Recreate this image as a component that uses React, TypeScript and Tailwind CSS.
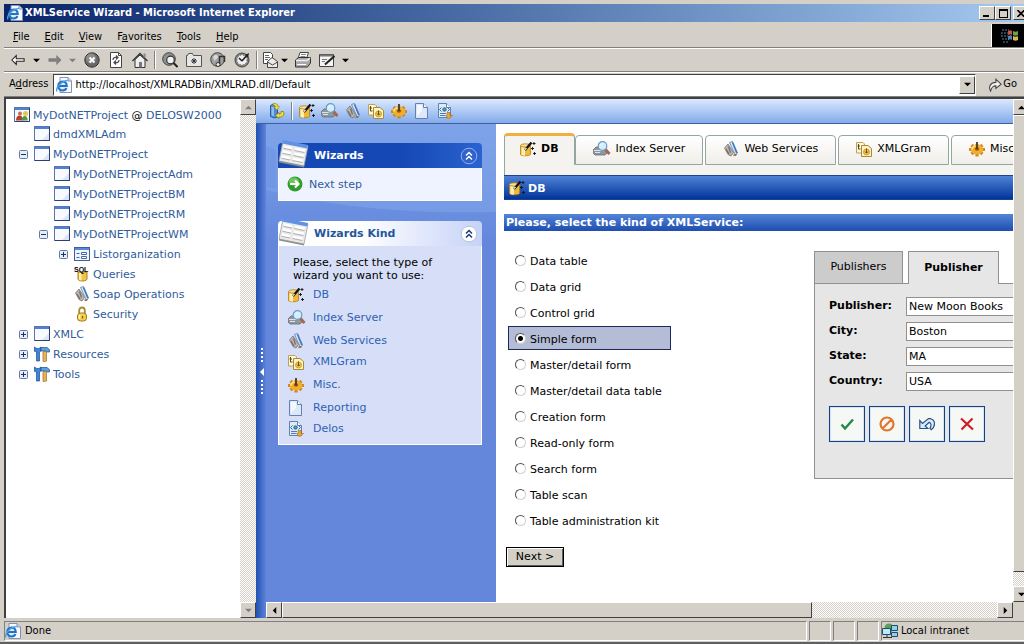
import clsx from 'clsx'
import { FC, ReactNode, useState } from 'react'

/* ---------- icons ---------- */

interface IconProps {
    size?: number
    children: ReactNode
}

const Icon: FC<IconProps> = ({ size = 16, children }) => (
    <svg width={size} height={size} viewBox="0 0 16 16" className="shrink-0" aria-hidden="true">
        {children}
    </svg>
)

const IePageIcon = () => (
    <Icon>
        <path d="M4 .5h8l3.500 3.500v11.500H4z" fill="#f6f9ff" stroke="#7f93b8" />
        <path d="M12 .5v3.500h3.500" fill="#c9d8ef" stroke="#7f93b8" />
        <circle cx="6.500" cy="9" r="5" fill="#d8ecfb" />
        <path d="M2.500 9h8.200C10.600 6 9 4.500 6.600 4.500 4.200 4.500 2.300 6.400 2.300 9s1.900 4.500 4.300 4.500c1.900 0 3.200-.8 3.800-2.300" fill="none" stroke="#2272c0" strokeWidth="2.200" />
        <path d="M1 14.500C-.8 11 5 4.200 11.800 3.400" fill="none" stroke="#4c9fe0" strokeWidth="1.400" />
    </Icon>
)

const WindowIcon = () => (
    <Icon>
        <rect x=".5" y=".5" width="15" height="14" fill="#f8faff" stroke="#5a74ae" />
        <path d="M1 1h14v2H1z" fill="#4f80dc" />
        <path d="M15.500 1v13.500H1" fill="none" stroke="#2c4070" />
        <path d="M8 14l7-7v7z" fill="#dbe5fa" />
    </Icon>
)

const ProjectIcon = () => (
    <Icon>
        <rect x=".5" y=".5" width="15" height="14" fill="#f4f7fe" stroke="#5a74ae" />
        <path d="M1 1h14v2H1z" fill="#4f80dc" />
        <path d="M15.500 1v13.500H1" fill="none" stroke="#2c4070" />
        <circle cx="11.500" cy="6.500" r="2.500" fill="#e6c84a" />
        <circle cx="6" cy="6.500" r="2" fill="#c0744c" />
        <path d="M2 13.500c0-3.500 1.500-5 3.500-5s3.500 1.500 3.500 5z" fill="#b3402e" />
        <path d="M8 13.500c0-3 1-4.500 2.700-4.500s3 1.500 3 4.500z" fill="#4d9a48" />
    </Icon>
)

const ListIcon = () => (
    <Icon>
        <rect x=".5" y="1.500" width="15" height="13" fill="#eef3fd" stroke="#3e5f9e" />
        <path d="M1 2h14v2H1z" fill="#5b87d8" />
        <path d="M2.500 7.500h3M2.500 11.500h3" stroke="#4467a8" />
        <path d="M7.500 6.500h5v2h-5zM7.500 10.500h5v2h-5z" fill="#fff" stroke="#4467a8" />
    </Icon>
)

const QueryIcon = () => (
    <Icon>
        <path d="M4 6v7c0 1.200 2 2 4.500 2s4.500-.8 4.500-2V6z" fill="#f0c544" stroke="#b07d1c" />
        <path d="M5 7v6.500c.8.600 1.500.800 2.500 1V7z" fill="#fff0b0" />
        <text x="0" y="6" fontSize="7" fontWeight="bold" fontFamily="Liberation Sans, sans-serif" fill="#000">SQL</text>
    </Icon>
)

const WebIcon = () => (
    <Icon>
        <path d="M1.500 7L5 3l5.500 8.500L8 15l-3-1.500z" fill="#b9b5b0" stroke="#6d7178" strokeWidth=".8" />
        <path d="M3 8l3 5M5.500 5.500l2 6" stroke="#7d6a5a" strokeWidth="1.200" />
        <path d="M6.500 1.500l3-1 5 11.500-2 2.500z" fill="#dbe9f8" stroke="#5c7ba6" strokeWidth=".8" />
        <path d="M9.500 1.500l4.300 10.500" stroke="#3f76be" strokeWidth="1.500" />
        <path d="M10.500 14.500l3-1" stroke="#9a6a38" strokeWidth="1.500" />
    </Icon>
)

const LockIcon = () => (
    <Icon>
        <path d="M5.200 8V4.500C5.200 2.500 6.500 1.500 8 1.500s2.800 1 2.800 3V8" fill="none" stroke="#a98a2e" strokeWidth="1.800" />
        <rect x="3.500" y="7" width="9" height="8" rx="3" fill="#f2cf4e" stroke="#a67c17" />
        <path d="M5.500 8.500v4.500" stroke="#fff3b8" strokeWidth="1.500" />
        <path d="M8.500 10v2.500" stroke="#7a5a10" strokeWidth="1.300" />
    </Icon>
)

const ToolsIcon = () => (
    <Icon>
        <path d="M0 1l3 1.500h2L7 1v4L5.500 6v9H2.500V6L0 5z" fill="#3b84d8" stroke="#1f4f94" strokeWidth=".7" />
        <path d="M7 1.500h6l2.500 2V6H13l-1-1H7z" fill="#58a0e6" stroke="#1f4f94" strokeWidth=".7" />
        <path d="M9 5.500h3.500V15l-1 .800H9.500L9 15z" fill="#e8b25a" stroke="#9a6a24" strokeWidth=".7" />
    </Icon>
)

const DbIcon = () => (
    <Icon>
        <path d="M.5 4.500v9C.5 15.200 9 15.200 10.500 13.500v-9z" fill="#f1b93a" stroke="#b07d1c" strokeWidth=".8" />
        <path d="M1.500 5.500v8.500c1 .5 2 .6 3.500.7V5.500z" fill="#fff0b4" />
        <ellipse cx="5.500" cy="4.500" rx="5" ry="1.700" fill="#fbe08a" stroke="#b07d1c" strokeWidth=".8" />
        <path d="M5 9l6.500-7.500" stroke="#111" strokeWidth="2.200" />
        <path d="M5 8.700l1.500-1.700" stroke="#fff" strokeWidth="1.200" />
        <path d="M14 1v3M12.500 2.500h3M12.500 6v3M11 7.500h3M14.500 11v3M13 12.500h3" stroke="#111" strokeWidth=".9" />
    </Icon>
)

const IndexIcon = () => (
    <svg width="18" height="16" viewBox="0 0 18 16" className="shrink-0" aria-hidden="true">
        <path d="M0 9l3-3h9l2 3v3l-2 2H2l-2-2z" fill="#8f979f" stroke="#636b73" strokeWidth=".8" />
        <path d="M1 9.500h8M2 11.500h5" stroke="#dfe3e8" />
        <path d="M12.500 8.500l4 4.500" stroke="#a8664c" strokeWidth="2.800" />
        <circle cx="9.500" cy="5" r="4.300" fill="#d3eefa" stroke="#6b9cc4" strokeWidth="1.200" />
        <path d="M7.500 4.500c.3-1 1-1.600 2-1.700" stroke="#fff" fill="none" />
    </svg>
)

const GramIcon = () => (
    <Icon>
        <path d="M.5 1.500H7l1.500 1.500v9h-8z" fill="#fff8dc" stroke="#bda356" />
        <path d="M2.500 3v5h2M1.500 5h2.500" stroke="#5a4a20" fill="none" />
        <path d="M5.500 4.500h6.500l3.500 3v8h-10z" fill="#fff3c4" stroke="#a98a35" />
        <circle cx="10.500" cy="11" r="3" fill="#f6cf52" stroke="#b98420" strokeWidth=".7" />
        <path d="M10.500 7.500v4.500M9 10.500l1.500 1.700 1.500-1.700" stroke="#704a10" fill="none" />
    </Icon>
)

const GearIcon = () => (
    <Icon>
        <path d="M8 3v12.500M0 8.500h16M2.500 4l11 9M13.500 4l-11 9" stroke="#cf8a1e" strokeWidth="3.200" />
        <ellipse cx="8" cy="8.500" rx="6.200" ry="4.800" fill="#f3ac2c" />
        <path d="M2.800 8.500c.5-2.500 2-3.400 3.700-3.700" stroke="#ffe196" fill="none" strokeWidth="1.500" />
        <ellipse cx="8" cy="8" rx="2.200" ry="1.800" fill="#8b5c16" />
        <path d="M8 1v7" stroke="#4a3a20" strokeWidth="1.800" />
    </Icon>
)

const PageIcon = () => (
    <Icon>
        <path d="M1.500.5h8l4 4v11h-12z" fill="#dce8f9" stroke="#6480ae" />
        <path d="M9.500.5v4h4" fill="#fff" stroke="#6480ae" />
        <path d="M3 2h5v6L3 13z" fill="#f3f8ff" />
    </Icon>
)

const DelosIcon = () => (
    <Icon>
        <path d="M1.500.5h8l4 4v10h-12z" fill="#dceafa" stroke="#6480ae" />
        <path d="M9.500.5v4h4" fill="#fff" stroke="#6480ae" />
        <path d="M4.500 4.500l-2 2 2 2M10.500 4.500l2 2-2 2" stroke="#2b6fae" fill="none" />
        <circle cx="7.500" cy="6.500" r="1.700" fill="#4fa3a0" stroke="#28609c" />
        <path d="M3 10.500h6M3 12.500h5" stroke="#5479b4" />
        <path d="M10 9.500h3v3h2.500L11.500 16l-3-3.500H10z" fill="#f0a636" stroke="#9e6a20" strokeWidth=".6" />
    </Icon>
)

const RefreshDbIcon = () => (
    <Icon>
        <path d="M1.500 2.500l3-1.500 4 1v12l-3 1-4-1.500z" fill="#4f8ad8" stroke="#2d589c" />
        <path d="M2.500 3.500l2.500.8v9l-2.500-.8z" fill="#8fbcf0" />
        <path d="M4 .5c3-.5 5 .5 5 3l1.500.2L8 7 5 4h1.500C6.500 2.500 5.500 2 4 2z" fill="#f2dc3c" stroke="#97851c" strokeWidth=".6" />
        <path d="M14.500 8.500c1.500 3.500-1 6-4.500 5.500V15.500L6.500 12.500 10 9.500V11c1.500.2 2.500-.8 2-2.500z" fill="#f2dc3c" stroke="#7c7c24" strokeWidth=".8" />
    </Icon>
)

const NextIcon = () => (
    <Icon>
        <circle cx="8" cy="8" r="7.500" fill="#2f9e2c" />
        <ellipse cx="7" cy="5.500" rx="5" ry="4" fill="#6fc65e" />
        <path d="M3 8h8M8 4.500L11.500 8 8 11.500" fill="none" stroke="#fff" strokeWidth="2.200" />
    </Icon>
)

const SheetIcon = () => (
    <svg width="32" height="28" viewBox="0 0 32 28" className="shrink-0" aria-hidden="true">
        <path d="M5 1l25 5-4 20L1 21z" fill="#e9e9e7" stroke="#9ba0ab" strokeWidth=".8" />
        <path d="M5 0l25 5-.8 3.500-25-5z" fill="#5f92e6" />
        <path d="M26 26L1 21l.2 1.500 25 5z" fill="#8d8c88" />
        <path d="M5.500 8l8.500 1.700M16.500 10.200l10 2M4.500 13l8.500 1.700M15.500 15.200l10 2M3.600 18l8.500 1.700M14.500 20.200l10 2" stroke="#aeaeb2" strokeWidth="1.500" />
        <path d="M5.700 6.500l8.500 1.700M16.800 8.700l10 2M4.700 11.500l8.500 1.700M15.800 13.700l10 2M3.800 16.500l8.500 1.700M14.800 18.700l10 2" stroke="#fff" strokeWidth="2.600" />
    </svg>
)

const Chevrons: FC<{ dark?: boolean }> = ({ dark }) => (
    <svg width="18" height="18" viewBox="0 0 18 18" aria-hidden="true">
        <circle cx="9" cy="9" r="7.800" fill={dark ? '#2f62cc' : '#fff'} stroke={dark ? '#8fb0ee' : '#b9c3dd'} />
        <path d="M6 8.500l3-3 3 3M6 12.500l3-3 3 3" fill="none" stroke={dark ? '#fff' : '#1c3a72'} strokeWidth="1.500" />
    </svg>
)

const Caret: FC<{ dir?: 'up' | 'down' | 'left' | 'right'; muted?: boolean }> = ({ dir = 'down', muted }) => {
    const paths = { up: 'M0 6h8L4 2z', down: 'M0 2h8L4 6z', left: 'M6 0v8L2 4z', right: 'M2 0v8l4-4z' }
    return (
        <svg width="7" height="7" viewBox="0 0 8 8" className="shrink-0" aria-hidden="true">
            <path d={paths[dir]} fill={muted ? '#808080' : '#000'} />
        </svg>
    )
}

/* ---------- browser chrome ---------- */

const raised = 'bg-[#d4d0c8] border border-t-white border-l-white border-r-[#404040] border-b-[#404040]'
const dither = 'bg-[repeating-conic-gradient(#fff_0_25%,#d4d0c8_0_50%)] bg-[length:2px_2px]'

const TitleBar = () => (
    <header className="flex h-[18px] shrink-0 items-center bg-linear-to-r from-[#0a246a] to-[#a6caf0] pl-[3px] text-white">
        <IePageIcon />
        <h1 className="ml-[2px] flex-1 truncate font-bold">XMLService Wizard - Microsoft Internet Explorer</h1>
        <button aria-label="Minimize" className={clsx(raised, 'flex h-[14px] w-4 items-end pb-[2px] pl-[3px]')}>
            <span className="h-[2px] w-[6px] bg-black" />
        </button>
        <button aria-label="Maximize" className={clsx(raised, 'mr-[2px] flex h-[14px] w-4 items-center justify-center')}>
            <span className="h-[9px] w-[9px] border border-t-2 border-black" />
        </button>
        <button aria-label="Close" className={clsx(raised, 'flex h-[14px] w-4 items-center justify-center')}>
            <svg width="8" height="7" viewBox="0 0 8 7" aria-hidden="true">
                <path d="M.5 0l7 7M7.500 0l-7 7" stroke="#000" strokeWidth="1.600" />
            </svg>
        </button>
    </header>
)

const menus = [
    ['', 'F', 'ile'],
    ['', 'E', 'dit'],
    ['', 'V', 'iew'],
    ['F', 'a', 'vorites'],
    ['', 'T', 'ools'],
    ['', 'H', 'elp']
]

const MenuBar = () => (
    <div className="mt-[2px] flex h-6 shrink-0 border-b border-[#808080]">
        <nav className="flex flex-1 items-center gap-[15px] pl-[9px] pt-[3px]">
            {menus.map(([before, key, after]) => (
                <button key={key + after}>
                    {before}
                    <u>{key}</u>
                    {after}
                </button>
            ))}
        </nav>
        <div className="flex w-[38px] items-center justify-center border-l border-white bg-black">
            <svg width="20" height="18" viewBox="0 0 20 18" aria-hidden="true">
                <path d="M1 3h7M0 6h7M0 9h7M1 12h7M2 15h6" stroke="#5b7fae" strokeWidth="1" strokeDasharray="2 1" />
                <path d="M7 4c2-1 3-1 4 0v4c-1-1-2-1-4 0z" fill="#c9573c" />
                <path d="M12 4c2 1 3 1 5 0v4c-2 1-3 1-5 0z" fill="#6da04c" />
                <path d="M7 9c2-1 3-1 4 0v4c-1-1-2-1-4 0z" fill="#4c82c4" />
                <path d="M12 9c2 1 3 1 5 0v4c-2 1-3 1-5 0z" fill="#d8b84a" />
            </svg>
        </div>
    </div>
)

const ToolButton: FC<{ label: string; className?: string; children: ReactNode }> = ({ label, className = 'w-6', children }) => (
    <button aria-label={label} className={clsx('flex h-full shrink-0 items-center justify-center', className)}>
        {children}
    </button>
)

const Separator = () => (
    <div className="flex w-[6px] shrink-0 justify-center">
        <span className="h-[18px] w-[2px] border-l border-r border-l-[#808080] border-r-white" />
    </div>
)

const StandardBar = () => (
    <div className="flex h-6 shrink-0 items-center border-t border-b border-t-white border-b-[#808080] pl-[6px]">
        <ToolButton label="Back" className="w-4">
            <Icon size={14}>
                <path d="M1 8l5-5v3.500h9v3H6V13z" fill="#fff" stroke="#222" strokeWidth="1.200" />
            </Icon>
        </ToolButton>
        <ToolButton label="Back history" className="w-5"><Caret /></ToolButton>
        <ToolButton label="Forward" className="w-[18px]">
            <Icon size={14}>
                <path d="M15 8l-5-5v3.500H1v3h9V13z" fill="#808080" stroke="#808080" />
            </Icon>
        </ToolButton>
        <ToolButton label="Forward history" className="w-4"><Caret muted /></ToolButton>
        <ToolButton label="Stop">
            <Icon>
                <circle cx="8" cy="8" r="7.200" fill="#686868" stroke="#333" />
                <circle cx="7" cy="6.500" r="5" fill="#8c8c8c" />
                <path d="M5.500 5.500l5 5M10.500 5.500l-5 5" stroke="#fff" strokeWidth="1.800" />
            </Icon>
        </ToolButton>
        <ToolButton label="Refresh">
            <Icon>
                <path d="M2.500.5h8l3 3v12h-11z" fill="#fff" stroke="#444" />
                <path d="M10.500.5v3h3" fill="none" stroke="#444" />
                <path d="M5 8c0-2 1.500-3 4-2.500M8 3.500l2 2-2 2M11 8c0 2-1.500 3-4 2.500M8 8.500l-2 2 2 2" fill="none" stroke="#444" strokeWidth="1.200" />
            </Icon>
        </ToolButton>
        <ToolButton label="Home">
            <Icon>
                <path d="M3 7.500v8h10v-8L8 3z" fill="#eee" stroke="#333" />
                <path d="M.5 9L8 1.500 15.500 9" fill="none" stroke="#333" strokeWidth="1.300" />
                <path d="M11.500 1.500h2v4h-2z" fill="#888" />
                <path d="M7 10h3v5.500H7z" fill="#777" />
            </Icon>
        </ToolButton>
        <Separator />
        <ToolButton label="Search">
            <Icon>
                <circle cx="7" cy="7" r="6.300" fill="#909090" stroke="#444" />
                <circle cx="8.500" cy="8" r="3.800" fill="#f2f2f2" stroke="#333" strokeWidth="1.200" />
                <path d="M11.500 11l4 4" stroke="#222" strokeWidth="2" />
            </Icon>
        </ToolButton>
        <ToolButton label="Favorites">
            <Icon>
                <path d="M.5 14.500V3.500h1l1-2h4l1 2h8v11z" fill="#e6e6e6" stroke="#555" />
                <path d="M8 6v6M5 9h6M6 7l4 4M10 7l-4 4" stroke="#333" />
            </Icon>
        </ToolButton>
        <ToolButton label="Media">
            <Icon>
                <circle cx="7.500" cy="7.500" r="6.800" fill="#a0a0a0" stroke="#444" />
                <path d="M3 5c2-3 5-2 5 0s-4 2-3 5" fill="#d8d8d8" />
                <path d="M9.500 12V4.500h5V10" fill="none" stroke="#333" strokeWidth="1.500" />
                <circle cx="8" cy="12.500" r="2" fill="#eee" stroke="#333" />
            </Icon>
        </ToolButton>
        <ToolButton label="History">
            <Icon>
                <circle cx="8" cy="8" r="7" fill="#8a8a8a" stroke="#444" />
                <circle cx="8" cy="8" r="5" fill="#f0f0f0" strokeDasharray="1 2" stroke="#555" />
                <path d="M8 9l5-6M8 9L5 6" stroke="#222" strokeWidth="1.600" />
                <path d="M11 3l4-2-1 5z" fill="#222" />
            </Icon>
        </ToolButton>
        <Separator />
        <ToolButton label="Mail" className="w-5">
            <Icon>
                <path d="M1.500.5h7l2 2v9h-9z" fill="#fff" stroke="#444" />
                <path d="M3 3.500h4M3 5.500h5M3 7.500h3" stroke="#666" />
                <path d="M5.500 9.500L10 5.500l5.500 4v6h-10z" fill="#ececec" stroke="#444" />
                <path d="M5.500 10l5 3 5-3" fill="none" stroke="#444" />
            </Icon>
        </ToolButton>
        <ToolButton label="Mail options" className="mr-[3px] w-2"><Caret /></ToolButton>
        <ToolButton label="Print">
            <Icon>
                <path d="M5 .5h8.500l-2 6H3z" fill="#fff" stroke="#444" />
                <path d="M6 2.500h5M5.500 4.500h5" stroke="#888" />
                <path d="M.5 8l3-2.500h12V11l-3 4H.5z" fill="#a8a8a8" stroke="#333" />
                <path d="M1 8.500h11l3-2.500" stroke="#eee" fill="none" strokeWidth="1.500" />
                <path d="M2 12.500h9" stroke="#fff" />
            </Icon>
        </ToolButton>
        <ToolButton label="Edit">
            <Icon>
                <path d="M.5 2.500h14v12H.5z" fill="#f4f4f4" stroke="#444" />
                <path d="M1 3.500h13" stroke="#777" strokeWidth="2" />
                <path d="M3 7.500h5M3 9.500h3" stroke="#777" />
                <path d="M6 12.500L15.500 4" stroke="#222" strokeWidth="2" />
            </Icon>
        </ToolButton>
        <ToolButton label="Edit options" className="w-3"><Caret /></ToolButton>
    </div>
)

const AddressBar = () => (
    <div className="flex h-[25px] shrink-0 items-center border-t border-b border-t-white border-b-[#808080] pl-[5px]">
        <label htmlFor="address" className="mr-[5px]">
            A<u>d</u>dress
        </label>
        <div className="flex h-[22px] flex-1 items-center border border-t-[#404040] border-l-[#404040] border-r-white border-b-white bg-white pl-[2px]">
            <IePageIcon />
            <input id="address" defaultValue="http://localhost/XMLRADBin/XMLRAD.dll/Default" className="ml-[3px] min-w-0 flex-1 pt-[2px] outline-none" />
            <button aria-label="Address history" className={clsx(raised, 'flex h-[18px] w-4 items-center justify-center')}>
                <Caret />
            </button>
        </div>
        <button className="ml-3 mr-3 flex items-center gap-px">
            <Icon size={14}>
                <path d="M3 15c-3-5 0-10 6-10V1.500L15 7l-6 5V9c-4 0-5 2-6 6z" fill="#f2f2f2" stroke="#444" strokeWidth="1.200" />
            </Icon>
            Go
        </button>
    </div>
)

const StatusBar = () => {
    const cell = 'border border-t-[#808080] border-l-[#808080] border-r-white border-b-white'
    return (
        <footer className="mt-[3px] flex h-5 shrink-0 gap-[2px]">
            <div className={clsx(cell, 'flex flex-1 items-center gap-1')}>
                <IePageIcon />
                Done
            </div>
            <div className={clsx(cell, 'w-[22px]')} />
            <div className={clsx(cell, 'w-[22px]')} />
            <div className={clsx(cell, 'w-[22px]')} />
            <div className={clsx(cell, 'flex w-[148px] items-center gap-[3px]')}>
                <Icon>
                    <circle cx="7" cy="5" r="4.500" fill="#5aa05a" />
                    <path d="M.5 5.500h8v6h-8z" fill="#bfe8f4" stroke="#1f4d6c" />
                    <path d="M9.500 2.500h6v5h-6zM9.500 9.500h6v4h-6z" fill="#8fd0ec" stroke="#1f4d6c" />
                    <path d="M1 14.500h9M5 12v2" stroke="#333" />
                </Icon>
                Local intranet
            </div>
        </footer>
    )
}

/* ---------- project tree ---------- */

interface TreeNode {
    label: string
    level: number
    icon: ReactNode
    state?: 'open' | 'closed'
}

const nodes: TreeNode[] = [
    { label: 'dmdXMLAdm', level: 0, icon: <WindowIcon /> },
    { label: 'MyDotNETProject', level: 0, icon: <WindowIcon />, state: 'open' },
    { label: 'MyDotNETProjectAdm', level: 1, icon: <WindowIcon /> },
    { label: 'MyDotNETProjectBM', level: 1, icon: <WindowIcon /> },
    { label: 'MyDotNETProjectRM', level: 1, icon: <WindowIcon /> },
    { label: 'MyDotNETProjectWM', level: 1, icon: <WindowIcon />, state: 'open' },
    { label: 'Listorganization', level: 2, icon: <ListIcon />, state: 'closed' },
    { label: 'Queries', level: 2, icon: <QueryIcon /> },
    { label: 'Soap Operations', level: 2, icon: <WebIcon /> },
    { label: 'Security', level: 2, icon: <LockIcon /> },
    { label: 'XMLC', level: 0, icon: <WindowIcon />, state: 'closed' },
    { label: 'Resources', level: 0, icon: <ToolsIcon />, state: 'closed' },
    { label: 'Tools', level: 0, icon: <ToolsIcon />, state: 'closed' }
]

const indents = ['pl-[13px]', 'pl-[33px]', 'pl-[53px]']

const ProjectTree = () => (
    <aside className="flex w-[250px] shrink-0 bg-white">
        <div className="min-w-0 flex-1 overflow-hidden pt-[7px] text-[#2f5b9c]">
            <div className="flex h-[18px] items-center gap-[3px] whitespace-nowrap pl-2">
                <ProjectIcon />
                <span className="pt-[2px]">
                    <a href="#project">MyDotNETProject</a> <span className="text-black">@</span> <a href="#server">DELOSW2000</a>
                </span>
            </div>
            <ul>
                {nodes.map(({ label, level, icon, state }) => (
                    <li key={label} className={clsx('flex h-5 items-center whitespace-nowrap', indents[level])}>
                        <span className="flex w-[15px]">
                            {state && (
                                <button aria-label={state === 'open' ? 'Collapse' : 'Expand'}>
                                    <svg width="9" height="9" viewBox="0 0 9 9" aria-hidden="true">
                                        <rect x=".5" y=".5" width="8" height="8" rx="1" fill="#e6edf8" stroke="#5f7ba6" />
                                        <path d={state === 'open' ? 'M2 4.500h5' : 'M2 4.500h5M4.500 2v5'} stroke="#1b335e" />
                                    </svg>
                                </button>
                            )}
                        </span>
                        {icon}
                        <a href={'#' + label} className="ml-[3px] pt-[2px]">{label}</a>
                    </li>
                ))}
            </ul>
        </div>
        <div className={clsx('flex w-4 flex-col justify-between', dither)}>
            <button aria-label="Scroll up" className={clsx(raised, 'flex h-4 items-center justify-center')}><Caret dir="up" muted /></button>
            <button aria-label="Scroll down" className={clsx(raised, 'flex h-4 items-center justify-center')}><Caret muted /></button>
        </div>
    </aside>
)

/* ---------- wizard pages ---------- */

const wizards = [
    { label: 'DB', icon: <DbIcon /> },
    { label: 'Index Server', icon: <IndexIcon /> },
    { label: 'Web Services', icon: <WebIcon />, short: true },
    { label: 'XMLGram', icon: <GramIcon /> },
    { label: 'Misc.', icon: <GearIcon /> },
    { label: 'Reporting', icon: <PageIcon />, short: true },
    { label: 'Delos', icon: <DelosIcon />, short: true }
]

const WizardToolbar = () => (
    <div className="flex h-[25px] shrink-0 items-center border-b border-[#3f5f9c] bg-linear-to-b from-[#dbe9fe] to-[#83abea] pl-[9px]">
        <ToolButton label="Refresh project"><RefreshDbIcon /></ToolButton>
        <Separator />
        {wizards.map(({ label, icon }) => (
            <ToolButton key={label} label={label} className="w-[23px]">{icon}</ToolButton>
        ))}
    </div>
)

const TaskPanel: FC<{ title: string; primary?: boolean; children: ReactNode }> = ({ title, primary, children }) => (
    <section className="mb-5">
        <div
            className={clsx(
                'flex h-[25px] items-end rounded-t bg-linear-to-r',
                primary ? 'from-[#1548b4] from-60% to-[#2a62cf] text-white' : 'from-white from-40% to-[#c6d3f7] text-[#25569c]'
            )}
        >
            <SheetIcon />
            <h2 className="ml-1 flex-1 self-center pt-[2px] font-bold">{title}</h2>
            <button aria-label={'Collapse ' + title} className="mr-1 self-center">
                <Chevrons dark={primary} />
            </button>
        </div>
        <div className={clsx('border border-t-0 border-white', primary ? 'bg-[#eff3ff]' : 'bg-[#d6dff7]')}>{children}</div>
    </section>
)

const TaskPane = () => (
    <aside className="relative w-[230px] shrink-0 bg-linear-to-b from-[#7ba2e7] to-[#6487dc] to-25% pl-3 pr-[14px] pt-[19px]">
        <svg className="absolute left-0 top-0 h-[96px] w-full" viewBox="0 0 230 96" preserveAspectRatio="none" aria-hidden="true">
            <path d="M0 0h230v88C150 90 70 84 0 66z" fill="#7ea3ea" opacity=".6" />
            <path d="M0 22c5 1 8 3 10 6v36H0z" fill="#6e93e2" opacity=".6" />
        </svg>
        <div className="relative">
            <TaskPanel title="Wizards" primary>
                <a href="#next" className="flex h-8 items-center gap-[6px] pl-2 text-[#2f5b9c]">
                    <NextIcon />
                    <span className="pt-[2px]">Next step</span>
                </a>
            </TaskPanel>
            <TaskPanel title="Wizards Kind">
                <p className="px-[14px] pt-[10px] leading-[13px]">Please, select the type of wizard you want to use:</p>
                <ul className="mt-[5px] pb-[2px] pl-[9px] text-[#2f5fb4]">
                    {wizards.map(({ label, icon, short }) => (
                        <li key={label} className={clsx('flex items-start leading-4', short ? 'h-[21px]' : 'h-[23px]')}>
                            <span className="w-[25px]">{icon}</span>
                            <a href={'#' + label}>{label}</a>
                        </li>
                    ))}
                </ul>
            </TaskPanel>
        </div>
    </aside>
)

const WizardTabs = () => (
    <div>
        <div className="flex items-start gap-[2px] whitespace-nowrap">
            {wizards.slice(0, 5).map(({ label, icon }, i) => (
                <button
                    key={label}
                    className={clsx(
                        'flex shrink-0 items-center gap-[5px] rounded-t border border-[#93a7a2]',
                        i === 0
                            ? '-mr-[2px] h-8 rounded-b-none border-t-[3px] border-b-0 border-t-[#f0b040] bg-[#f5f3ef] px-[15px] pb-[3px] font-bold'
                            : 'mt-[2px] h-[30px] bg-linear-to-b from-white to-[#f0eee8] px-[17px] pb-[2px]'
                    )}
                >
                    {icon}
                    {label}
                </button>
            ))}
        </div>
        <div className="h-[10px] border-l border-[#93a7a2] bg-[#f5f3ef]" />
    </div>
)

const kinds = [
    'Data table',
    'Data grid',
    'Control grid',
    'Simple form',
    'Master/detail form',
    'Master/detail data table',
    'Creation form',
    'Read-only form',
    'Search form',
    'Table scan',
    'Table administration kit'
]

const KindForm = () => {
    const [kind, setKind] = useState('Simple form')
    return (
        <form className="shrink-0" onSubmit={e => e.preventDefault()}>
            <div className="ml-1 w-[163px]">
                {kinds.map(name => (
                    <label
                        key={name}
                        className={clsx(
                            'mb-[2px] flex h-6 items-center gap-1 whitespace-nowrap border pl-[6px]',
                            name === kind ? 'border-[#1a2a5c] bg-[#b5bdd6]' : 'border-transparent'
                        )}
                    >
                        <input
                            type="radio"
                            name="kind"
                            checked={name === kind}
                            onChange={() => setKind(name)}
                            className="h-[11px] w-[11px] shrink-0 appearance-none rounded-full border border-t-[#505050] border-l-[#505050] border-r-[#d4d0c8] border-b-[#d4d0c8] bg-white checked:bg-[radial-gradient(circle,#000_2px,#fff_3px)]"
                        />
                        <span className="pt-[5px]">{name}</span>
                    </label>
                ))}
            </div>
            <button className="ml-[2px] mt-[13px] h-5 w-[58px] border border-black bg-[#d4d0c8] shadow-[inset_1px_1px_#fff,inset_-1px_-1px_#606060]">
                Next &gt;
            </button>
        </form>
    )
}

const fields = [
    ['Publisher', 'New Moon Books'],
    ['City', 'Boston'],
    ['State', 'MA'],
    ['Country', 'USA']
]

const actions = [
    {
        label: 'Save',
        icon: <path d="M2.500 8.500l3.500 4L14 3.500" fill="none" stroke="#1f8a48" strokeWidth="2.400" />
    },
    {
        label: 'Cancel',
        icon: <path d="M3.500 12.500l9-9M14.500 8A6.500 6.500 0 1 1 1.500 8a6.500 6.500 0 0 1 13 0z" fill="none" stroke="#e2762a" strokeWidth="2.200" />
    },
    {
        label: 'Undo',
        icon: <path d="M.8 4.500v8h8L6.200 10l4-3.800c2 .8 2.500 3.300.8 6l1.200 1.500c4.500-3 4.500-9.500-.5-11L9.500 2.500 3.500 7.500z" fill="#dcebfa" stroke="#24508c" strokeWidth="1.200" />
    },
    {
        label: 'Delete',
        icon: <path d="M2 2.500l12 11M13.500 2.500L2.500 13.500" fill="none" stroke="#d01c28" strokeWidth="2.200" />
    }
]

const PreviewForm = () => (
    <form className="mt-[3px] w-[320px] shrink-0" onSubmit={e => e.preventDefault()}>
        <div className="relative flex gap-[5px]">
            <button className="-mb-px h-[33px] w-[89px] border border-[#909090] bg-[#ccc]">Publishers</button>
            <button className="-mb-px h-[33px] w-[91px] border border-b-0 border-[#909090] bg-[#e6e6e6] font-bold">Publisher</button>
        </div>
        <div className="border border-[#909090] bg-[#e6e6e6] px-[14px] pt-[13px] pb-9">
            <div className="flex flex-col gap-[6px]">
                {fields.map(([label, value]) => (
                    <div key={label} className="flex items-center">
                        <label htmlFor={label} className="w-[77px] font-bold">{label}:</label>
                        <input id={label} defaultValue={value} className="h-[19px] w-[200px] border border-[#909090] bg-white px-[2px]" />
                    </div>
                ))}
            </div>
            <div className="mt-[15px] flex gap-1">
                {actions.map(({ label, icon }) => (
                    <button
                        key={label}
                        type="button"
                        aria-label={label}
                        className="flex h-9 w-9 items-center justify-center border border-[#1c3f6e] bg-[#f6f8f6] shadow-[inset_0_0_0_1px_#d3e3f8,0_0_0_1px_#d9e6f8]"
                    >
                        <Icon>{icon}</Icon>
                    </button>
                ))}
            </div>
        </div>
    </form>
)

const WizardPage = () => (
    <main className="min-w-0 flex-1 overflow-hidden bg-white pl-2 pt-[9px]">
        <WizardTabs />
        <h2 className="flex h-[25px] items-center gap-[3px] border-t border-b border-t-[#1d4391] border-b-[#1d4391] bg-linear-to-b from-[#4f82d6] to-[#003399] pl-[5px] font-bold text-white">
            <DbIcon />
            <span className="pt-[3px]">DB</span>
        </h2>
        <h3 className="mt-[14px] flex h-[17px] items-center whitespace-nowrap bg-linear-to-b from-[#5285d8] to-[#1f4db0] pl-[2px] pt-[2px] font-bold text-white">
            Please, select the kind of XMLService:
        </h3>
        <div className="mt-[17px] flex gap-[143px]">
            <KindForm />
            <PreviewForm />
        </div>
    </main>
)

const Splitter = () => (
    <div className="flex w-[10px] shrink-0 items-center justify-center bg-linear-to-r from-[#1f50b2] to-[#5f84da]">
        <svg width="5" height="50" viewBox="0 0 5 50" aria-hidden="true">
            <path d="M3 2v16M3 34v14" stroke="#fff" strokeWidth="2" strokeDasharray="2 2" />
            <path d="M5 22v8l-4-4z" fill="#fff" />
        </svg>
    </div>
)

const HorizontalScroll = () => (
    <div className={clsx('flex h-4 shrink-0', dither)}>
        <button aria-label="Scroll left" className={clsx(raised, 'flex w-4 items-center justify-center')}><Caret dir="left" /></button>
        <div className={clsx(raised, 'w-[71%]')} />
        <button aria-label="Scroll right" className={clsx(raised, 'ml-auto flex w-4 items-center justify-center')}><Caret dir="right" /></button>
    </div>
)

const VerticalScroll = () => (
    <div className="flex w-4 shrink-0 flex-col bg-[#d4d0c8]">
        <button aria-label="Scroll up" className={clsx(raised, 'flex h-4 items-center justify-center')}><Caret dir="up" /></button>
        <div className={clsx(raised, 'h-[88%]')} />
        <div className={clsx('flex-1', dither)} />
        <button aria-label="Scroll down" className={clsx(raised, 'mb-4 flex h-4 items-center justify-center')}><Caret /></button>
    </div>
)

export default function App() {
    return (
        <div className="h-screen min-h-[600px] overflow-hidden bg-[#d4d0c8]">
            <div className="-mr-2 flex h-full flex-col border-b-2 border-[#606060] pt-1 pr-[3px] pb-px pl-1 font-['DejaVu_Sans_Condensed','DejaVu_Sans',sans-serif] text-[11px] text-black">
                <TitleBar />
                <MenuBar />
                <StandardBar />
                <AddressBar />
                <div className="flex min-h-0 flex-1 border-t-2 border-l-2 border-[#404040] font-['DejaVu_Sans',sans-serif]">
                    <ProjectTree />
                    <div className="flex min-w-0 flex-1">
                        <div className="flex min-w-0 flex-1 flex-col">
                            <WizardToolbar />
                            <div className="flex min-h-0 flex-1">
                                <Splitter />
                                <div className="flex min-w-0 flex-1 flex-col">
                                    <div className="flex min-h-0 flex-1">
                                        <TaskPane />
                                        <WizardPage />
                                    </div>
                                    <HorizontalScroll />
                                </div>
                            </div>
                        </div>
                        <VerticalScroll />
                    </div>
                </div>
                <StatusBar />
            </div>
        </div>
    )
}
